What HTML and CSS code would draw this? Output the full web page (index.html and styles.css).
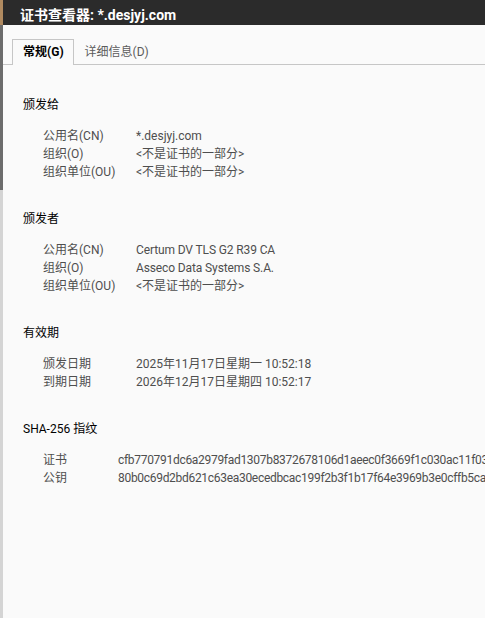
FILE: index.html
```html
<!DOCTYPE html>
<html lang="zh-CN">
<head>
<meta charset="utf-8">
<link rel="stylesheet" href="styles.css">
</head>
<body>
<div class="screen">
  <div class="backdrop"></div>
  <div class="dialog">
    <div class="titlebar">证书查看器: *.desjyj.com</div>
    <div class="content">
      <div class="tabs">
        <div class="tab active">常规(G)</div>
        <div class="tab">详细信息(D)</div>
      </div>
      <div class="panel">
        <section class="group">
          <div class="heading">颁发给</div>
          <div class="rows">
            <div class="row"><span class="label">公用名(CN)</span><span class="value">*.desjyj.com</span></div>
            <div class="row"><span class="label">组织(O)</span><span class="value">&lt;不是证书的一部分&gt;</span></div>
            <div class="row"><span class="label">组织单位(OU)</span><span class="value">&lt;不是证书的一部分&gt;</span></div>
          </div>
        </section>
        <section class="group">
          <div class="heading">颁发者</div>
          <div class="rows">
            <div class="row"><span class="label">公用名(CN)</span><span class="value latin">Certum DV TLS G2 R39 CA</span></div>
            <div class="row"><span class="label">组织(O)</span><span class="value latin">Asseco Data Systems S.A.</span></div>
            <div class="row"><span class="label">组织单位(OU)</span><span class="value">&lt;不是证书的一部分&gt;</span></div>
          </div>
        </section>
        <section class="group">
          <div class="heading">有效期</div>
          <div class="rows">
            <div class="row"><span class="label">颁发日期</span><span class="value">2025年11月17日星期一 10:52:18</span></div>
            <div class="row"><span class="label">到期日期</span><span class="value">2026年12月17日星期四 10:52:17</span></div>
          </div>
        </section>
        <section class="group">
          <div class="heading">SHA-256 指纹</div>
          <div class="rows hash">
            <div class="row"><span class="label">证书</span><span class="value">cfb770791dc6a2979fad1307b8372678106d1aeec0f3669f1c030ac11f03a1b2c4</span></div>
            <div class="row"><span class="label">公钥</span><span class="value">80b0c69d2bd621c63ea30ecedbcac199f2b3f1b17f64e3969b3e0cffb5ca7d21</span></div>
          </div>
        </section>
      </div>
    </div>
  </div>
</div>
</body>
</html>
```
FILE: styles.css
```css
html, body {
  margin: 0;
  padding: 0;
  width: 485px;
  height: 618px;
  overflow: hidden;
}
body {
  font-family: "Segoe UI", Roboto, "Noto Sans CJK SC", sans-serif;
  font-size: 12px;
}
.screen {
  display: flex;
  height: 618px;
}
.backdrop {
  flex: 0 0 3px;
  background: linear-gradient(to bottom, #b08a60 0, #b08a60 25px, #6c6c6c 25px, #6c6c6c 190px, #d4d4d4 190px, #d4d4d4 100%);
}
.dialog {
  flex: 1;
  min-width: 0;
  display: flex;
  flex-direction: column;
  background: #fafafa;
  overflow: hidden;
}
.titlebar {
  height: 25px;
  background: #2b2b2b;
  color: #fff;
  font-weight: bold;
  font-size: 14px;
  line-height: 25px;
  padding-left: 17px;
  padding-top: 3px;
  box-sizing: border-box;
  white-space: nowrap;
}
.content {
  padding-top: 14px;
}
.tabs {
  display: flex;
  padding-left: 9px;
  border-bottom: 1px solid #c6c6c6;
  height: 25px;
  box-sizing: content-box;
}
.tab {
  height: 25px;
  line-height: 25px;
  padding: 0 9px 0 10px;
  color: #5c5c5c;
  box-sizing: border-box;
  border: 1px solid transparent;
  border-bottom: none;
}
.tab.active {
  color: #000;
  font-weight: bold;
  border-color: #c6c6c6;
  background: #fafafa;
  height: 26px;
  margin-bottom: -1px;
  line-height: 25px;
}
.panel {
  padding-top: 31px;
  padding-left: 20px;
}
.group {
  margin-bottom: 29px;
}
.heading {
  line-height: 18px;
  color: #000;
  margin-bottom: 13px;
  white-space: nowrap;
}
.row {
  display: flex;
  line-height: 18px;
  white-space: nowrap;
  color: #4e4e4e;
}
.label {
  flex: 0 0 93px;
  padding-left: 20px;
}
.hash .label {
  flex-basis: 75px;
}
.value {
  white-space: nowrap;
}
.latin {
  letter-spacing: -0.12px;
}
.hash .value {
  letter-spacing: -0.3px;
}
```
